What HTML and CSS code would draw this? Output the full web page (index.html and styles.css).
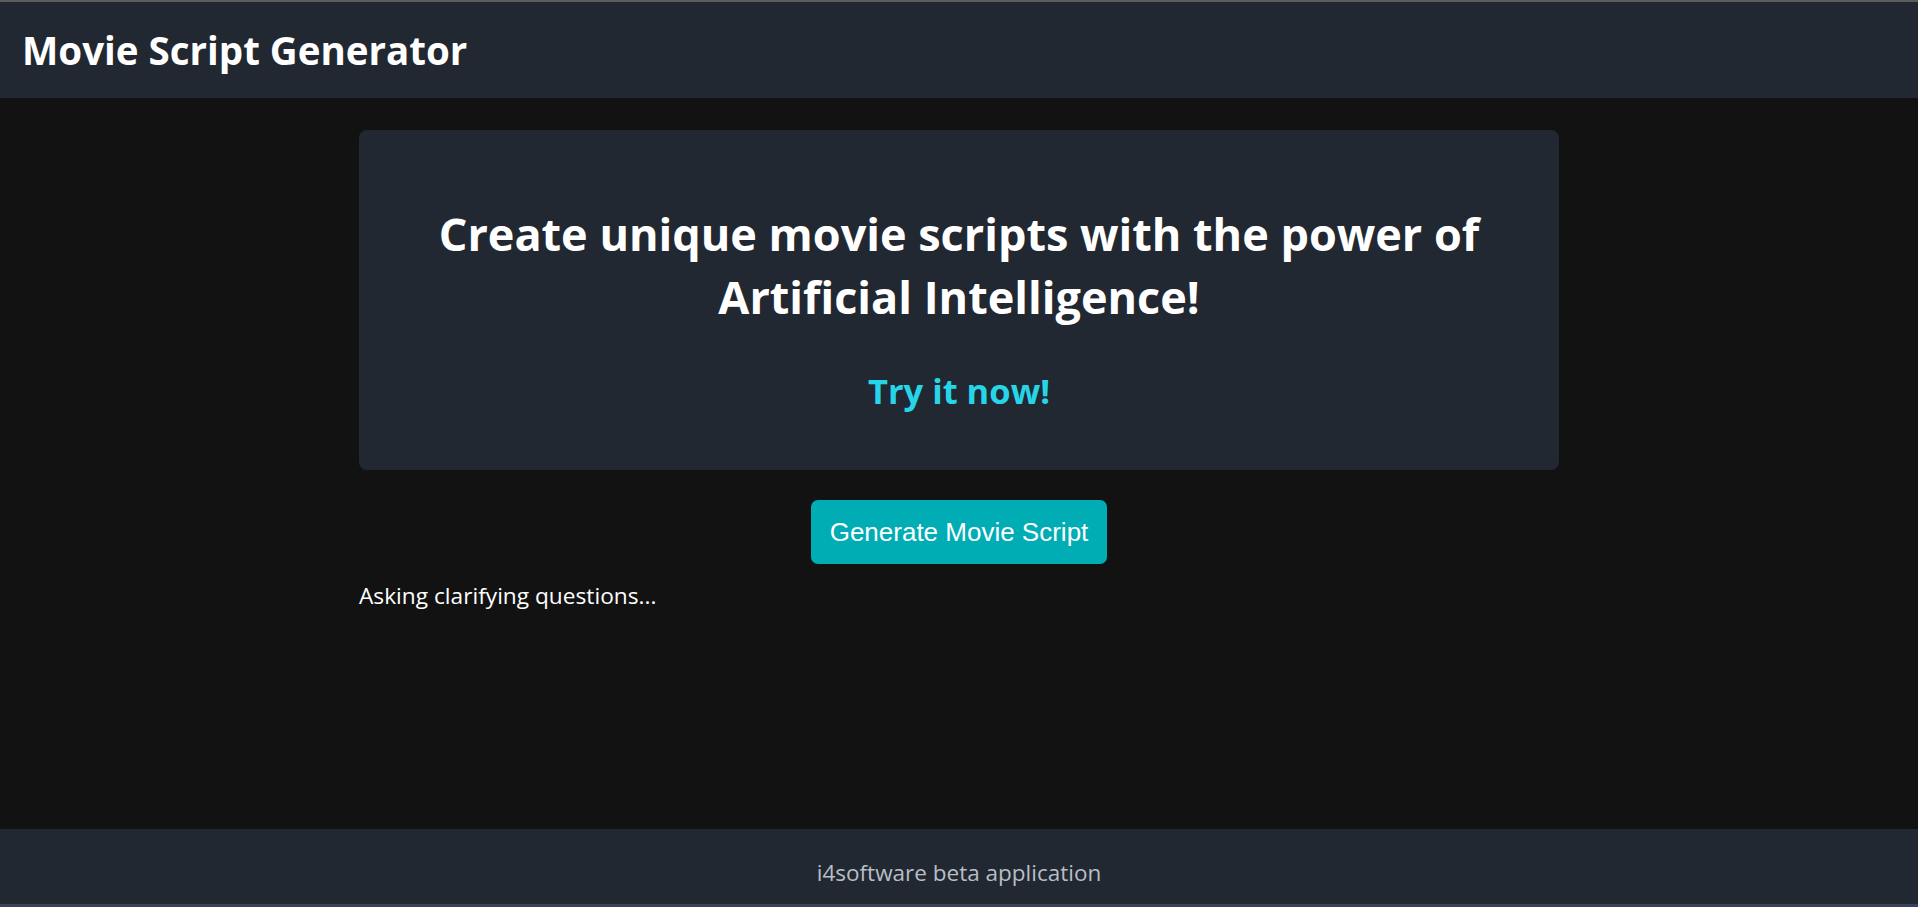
FILE: index.html
```html
<!DOCTYPE html>
<html lang="en">
<head>
<meta charset="utf-8">
<title>Movie Script Generator</title>
<link rel="stylesheet" href="styles.css">
</head>
<body>
<div class="page">
  <header class="topbar">
    <h1 class="brand">Movie Script Generator</h1>
  </header>
  <main class="content">
    <section class="hero">
      <h2 class="hero-title">Create unique movie scripts with the power of Artificial Intelligence!</h2>
      <p class="hero-cta">Try it now!</p>
    </section>
    <div class="actions">
      <button class="generate-btn" type="button">Generate Movie Script</button>
    </div>
    <p class="status">Asking clarifying questions...</p>
  </main>
  <footer class="footer">
    <p class="footer-text">i4software beta application</p>
  </footer>
</div>
</body>
</html>
```

FILE: styles.css
```css
* { box-sizing: border-box; }
html, body { margin: 0; padding: 0; height: 100%; }
body {
  background: #121212;
  color: #ffffff;
  font-family: "Open Sans", "Noto Sans", sans-serif;
}
.page {
  min-height: 100vh;
  display: flex;
  flex-direction: column;
}
.topbar {
  background: #222831;
  border-top: 2px solid #5c5c5c;
  height: 98px;
  display: flex;
  align-items: center;
  padding: 0 22px;
}
.brand {
  margin: 0;
  font-size: 38.5px;
  font-weight: 700;
  color: #ffffff;
}
.content {
  width: 1200px;
  margin: 0 auto;
  padding-top: 32px;
}
.hero {
  background: #222831;
  border-radius: 8px;
  height: 340px;
  display: flex;
  flex-direction: column;
  align-items: center;
  padding: 72px 60px 0;
  text-align: center;
}
.hero-title {
  margin: 0;
  font-size: 45px;
  line-height: 63px;
  font-weight: 700;
  color: #ffffff;
}
.hero-cta {
  margin: 39px 0 0;
  font-size: 34.5px;
  font-weight: 700;
  color: #26d6e8;
}
.actions {
  display: flex;
  justify-content: center;
  margin-top: 30px;
}
.generate-btn {
  background: #00adb5;
  color: #ffffff;
  border: none;
  border-radius: 7px;
  height: 64px;
  padding: 0 19px;
  font-family: "Liberation Sans", Arial, sans-serif;
  font-size: 26px;
}
.status {
  margin: 16px 0 0;
  font-size: 22.7px;
  color: #ffffff;
}
.footer {
  margin-top: auto;
  background: #222831;
  height: 78px;
  border-bottom: 3px solid #34425e;
  display: flex;
  align-items: center;
  justify-content: center;
  padding-top: 12px;
}
.footer-text {
  margin: 0;
  font-size: 22.5px;
  color: #b8bec6;
}
```
